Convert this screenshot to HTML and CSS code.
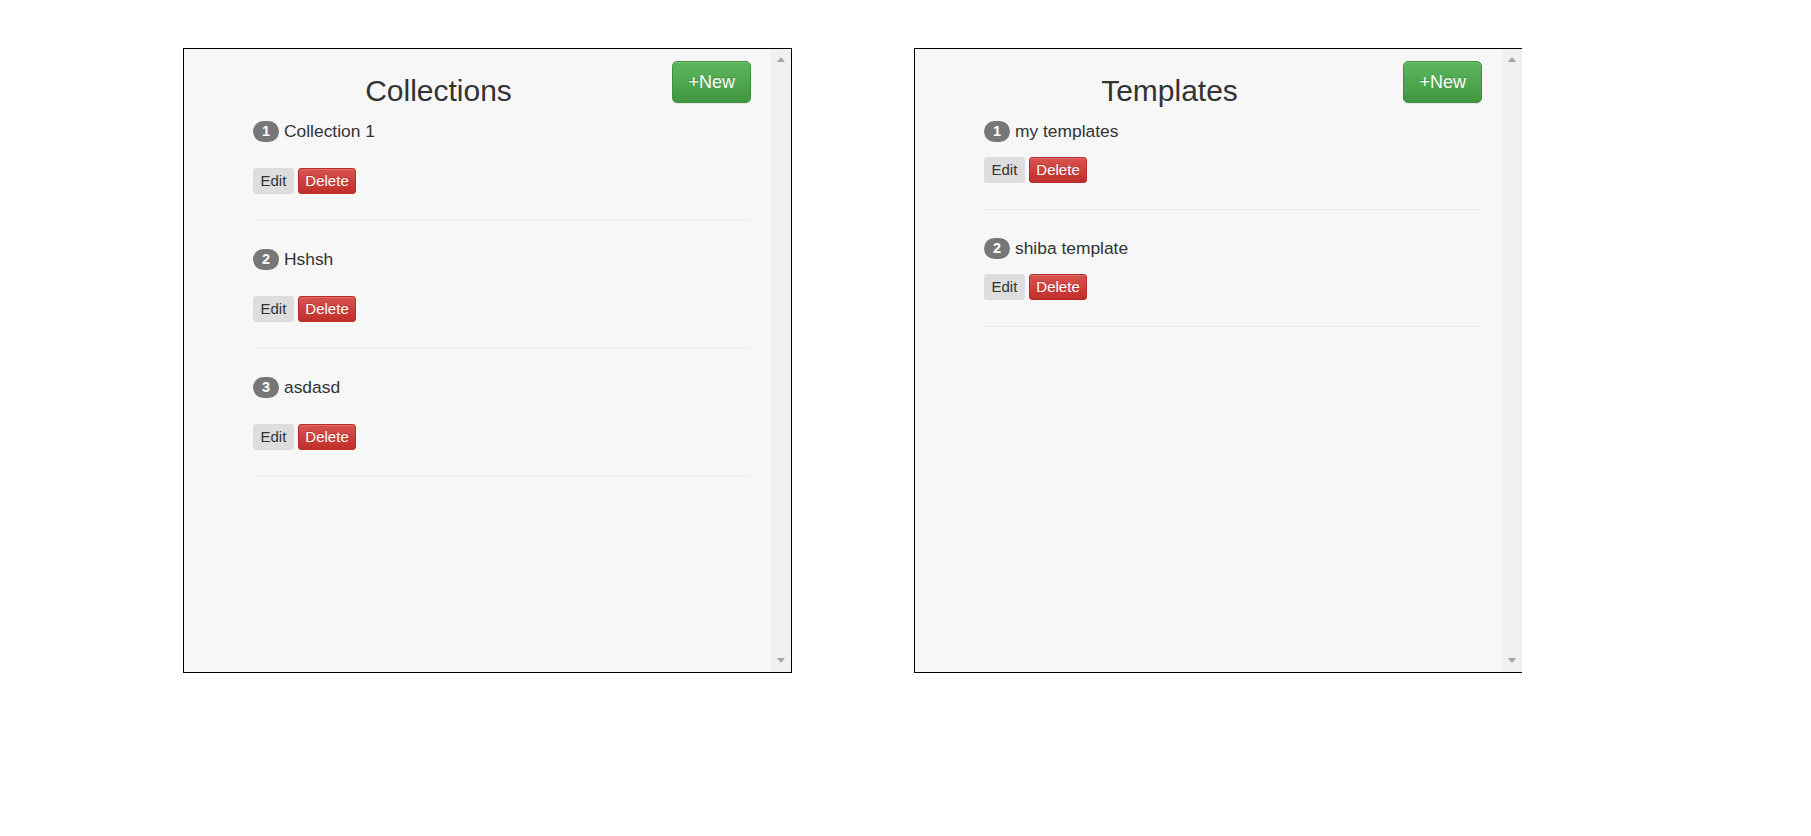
FILE: index.html
```html
<!DOCTYPE html>
<html>
<head>
<meta charset="utf-8">
<title>Collections and Templates</title>
<link rel="stylesheet" href="styles.css">
</head>
<body>
<div class="stage">
  <section class="panel">
    <div class="panel-body">
      <div class="head">
        <h2 class="title">Collections</h2>
        <button class="btn-new">+New</button>
      </div>
      <ul class="list list--spaced">
        <li class="item">
          <div class="item-title"><span class="badge">1</span><span>Collection 1</span></div>
          <div class="actions"><button class="btn-edit">Edit</button><button class="btn-delete">Delete</button></div>
          <hr class="sep">
        </li>
        <li class="item">
          <div class="item-title"><span class="badge">2</span><span>Hshsh</span></div>
          <div class="actions"><button class="btn-edit">Edit</button><button class="btn-delete">Delete</button></div>
          <hr class="sep">
        </li>
        <li class="item">
          <div class="item-title"><span class="badge">3</span><span>asdasd</span></div>
          <div class="actions"><button class="btn-edit">Edit</button><button class="btn-delete">Delete</button></div>
          <hr class="sep">
        </li>
      </ul>
    </div>
    <div class="scrollbar"><span class="arrow-up"></span><span class="arrow-down"></span></div>
  </section>

  <section class="panel">
    <div class="panel-body">
      <div class="head">
        <h2 class="title">Templates</h2>
        <button class="btn-new">+New</button>
      </div>
      <ul class="list">
        <li class="item">
          <div class="item-title"><span class="badge">1</span><span>my templates</span></div>
          <div class="actions"><button class="btn-edit">Edit</button><button class="btn-delete">Delete</button></div>
          <hr class="sep">
        </li>
        <li class="item">
          <div class="item-title"><span class="badge">2</span><span>shiba template</span></div>
          <div class="actions"><button class="btn-edit">Edit</button><button class="btn-delete">Delete</button></div>
          <hr class="sep">
        </li>
      </ul>
    </div>
    <div class="scrollbar"><span class="arrow-up"></span><span class="arrow-down"></span></div>
  </section>
</div>
</body>
</html>
```

FILE: styles.css
```css
html, body {
  margin: 0;
  padding: 0;
  background: #ffffff;
}

body {
  font-family: "Liberation Sans", Arial, Helvetica, sans-serif;
  color: #333333;
}

.stage {
  box-sizing: border-box;
  width: 1522px;
  overflow: hidden;
  display: flex;
  gap: 122px;
  padding: 48px 0 0 183px;
}

.panel {
  box-sizing: border-box;
  flex-shrink: 0;
  width: 609px;
  height: 625px;
  border: 1px solid #000000;
  background: #f7f7f7;
  display: flex;
}

.panel-body {
  flex: 1;
  padding: 12px 20px 0 69px;
  min-width: 0;
}

.scrollbar {
  width: 20px;
  background: #f0f0f0;
  display: flex;
  flex-direction: column;
  justify-content: space-between;
  align-items: center;
  padding: 8px 0 9px;
  box-sizing: border-box;
}

.arrow-up {
  width: 0;
  height: 0;
  border-left: 4.5px solid transparent;
  border-right: 4.5px solid transparent;
  border-bottom: 5px solid #a3a3a3;
}

.arrow-down {
  width: 0;
  height: 0;
  border-left: 4.5px solid transparent;
  border-right: 4.5px solid transparent;
  border-top: 5px solid #a3a3a3;
}

.head {
  display: flex;
  align-items: flex-start;
  height: 58px;
}

.title {
  margin: 13px 0 0;
  width: 371px;
  text-align: center;
  font-size: 30px;
  line-height: 33px;
  font-weight: normal;
  color: #333333;
}

.btn-new {
  margin-left: auto;
  box-sizing: border-box;
  height: 42px;
  padding: 8px 15px;
  font-family: inherit;
  font-size: 18px;
  line-height: 24px;
  color: #ffffff;
  text-shadow: 0 -1px 0 rgba(0, 0, 0, 0.2);
  background: linear-gradient(to bottom, #5cb85c 0%, #419641 100%);
  border: 1px solid #3e8f3e;
  border-radius: 5px;
  box-shadow: inset 0 1px 0 rgba(255, 255, 255, 0.15), 0 1px 1px rgba(0, 0, 0, 0.075);
}

.list {
  list-style: none;
  margin: 0;
  padding: 0;
}

.item-title {
  display: flex;
  align-items: center;
  gap: 5px;
  height: 24px;
  font-size: 17.4px;
  line-height: 24px;
  color: #333333;
}

.badge {
  box-sizing: border-box;
  min-width: 26px;
  height: 21px;
  border-radius: 10.5px;
  background: #777777;
  color: #ffffff;
  font-size: 14.5px;
  font-weight: bold;
  line-height: 21px;
  text-align: center;
}

.actions {
  display: flex;
  gap: 4px;
  margin-top: 14px;
}

.list--spaced .actions {
  margin-top: 25px;
}

.btn-edit,
.btn-delete {
  box-sizing: border-box;
  height: 26px;
  padding: 0 6.5px;
  font-family: inherit;
  font-size: 15px;
  line-height: 24px;
  border-radius: 3px;
}

.btn-edit {
  background: #dddddd;
  border: 1px solid #dddddd;
  color: #333333;
}

.btn-delete {
  background: linear-gradient(to bottom, #d9534f 0%, #c12e2a 100%);
  border: 1px solid #b92c28;
  color: #ffffff;
  text-shadow: 0 -1px 0 rgba(0, 0, 0, 0.2);
  box-shadow: inset 0 1px 0 rgba(255, 255, 255, 0.15);
}

.sep {
  margin: 26px 0 26px;
  border: 0;
  border-top: 1px solid #eeeeee;
  height: 0;
}
```
